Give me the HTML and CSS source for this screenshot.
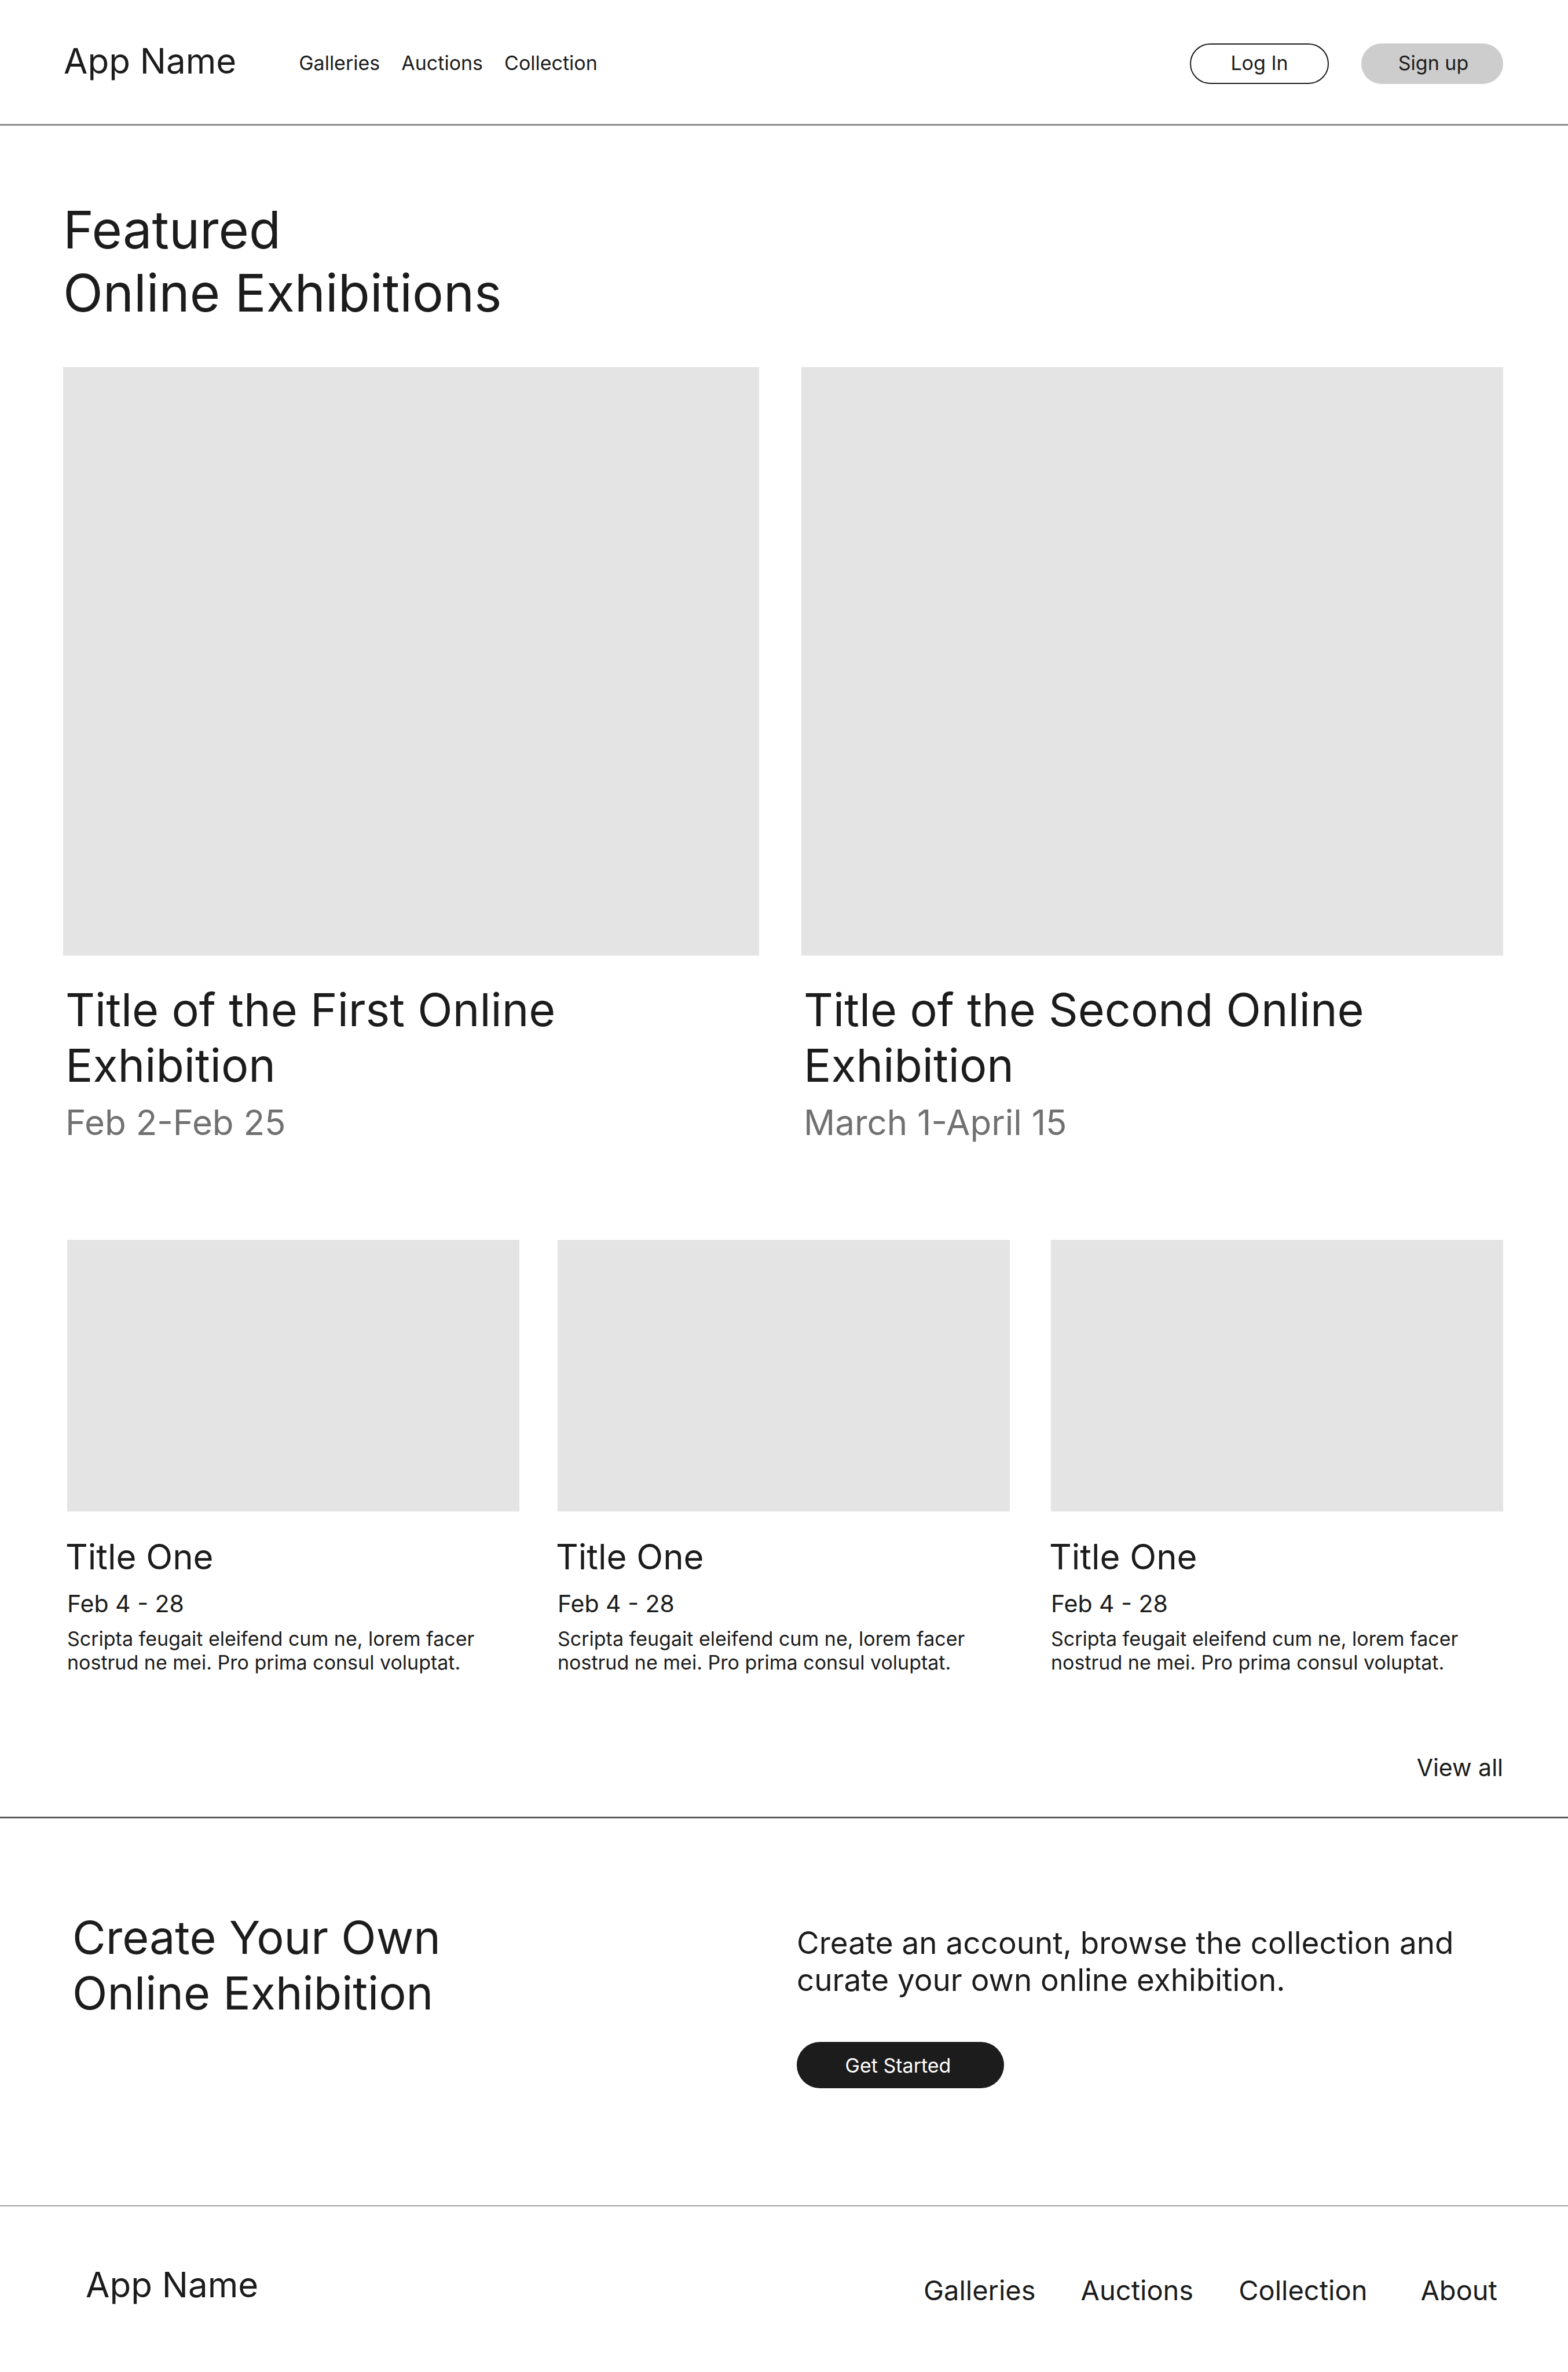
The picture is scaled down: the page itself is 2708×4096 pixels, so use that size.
FILE: index.html
```html
<!DOCTYPE html>
<html lang="en">
<head>
<meta charset="utf-8">
<meta name="viewport" content="width=device-width, initial-scale=1">
<title>App Name</title>
<link rel="stylesheet" href="styles.css">
</head>
<body>
<header class="header">
  <a class="brand" href="#">App Name</a>
  <nav class="nav">
    <a href="#">Galleries</a>
    <a href="#">Auctions</a>
    <a href="#">Collection</a>
  </nav>
  <div class="account">
    <button class="button button-outline" type="button">Log In</button>
    <button class="button button-soft" type="button">Sign up</button>
  </div>
</header>
<main>
  <section class="exhibitions">
    <h1 class="page-title">Featured<br>Online Exhibitions</h1>
    <div class="features">
      <article>
        <div class="feature-image"></div>
        <h2 class="feature-title">Title of the First Online<br>Exhibition</h2>
        <p class="feature-date">Feb 2-Feb 25</p>
      </article>
      <article>
        <div class="feature-image"></div>
        <h2 class="feature-title">Title of the Second Online<br>Exhibition</h2>
        <p class="feature-date">March 1-April 15</p>
      </article>
    </div>
    <div class="cards">
      <article class="card">
        <div class="card-image"></div>
        <h3 class="card-title">Title One</h3>
        <p class="card-date">Feb 4 - 28</p>
        <p class="card-text">Scripta feugait eleifend cum ne, lorem facer<br>nostrud ne mei. Pro prima consul voluptat.</p>
      </article>
      <article class="card">
        <div class="card-image"></div>
        <h3 class="card-title">Title One</h3>
        <p class="card-date">Feb 4 - 28</p>
        <p class="card-text">Scripta feugait eleifend cum ne, lorem facer<br>nostrud ne mei. Pro prima consul voluptat.</p>
      </article>
      <article class="card">
        <div class="card-image"></div>
        <h3 class="card-title">Title One</h3>
        <p class="card-date">Feb 4 - 28</p>
        <p class="card-text">Scripta feugait eleifend cum ne, lorem facer<br>nostrud ne mei. Pro prima consul voluptat.</p>
      </article>
    </div>
    <a class="view-all" href="#">View all</a>
  </section>
  <section class="create">
    <h2 class="create-title">Create Your Own<br>Online Exhibition</h2>
    <div class="create-body">
      <p class="create-text">Create an account, browse the collection and<br>curate your own online exhibition.</p>
      <button class="button button-dark" type="button">Get Started</button>
    </div>
  </section>
</main>
<footer class="footer">
  <a class="brand" href="#">App Name</a>
  <nav class="footer-nav">
    <a href="#">Galleries</a>
    <a href="#">Auctions</a>
    <a href="#">Collection</a>
    <a class="about" href="#">About</a>
  </nav>
</footer>
</body>
</html>
```

FILE: styles.css
```css
* { box-sizing: border-box; }
body {
  margin: 0;
  background: #fff;
  color: #1c1c1c;
  font-family: Inter, "Liberation Sans", sans-serif;
}
h1, h2, h3, p { margin: 0; font-weight: 400; }
a { color: inherit; text-decoration: none; }

.header {
  display: flex;
  align-items: flex-start;
  padding: 67px 112px 71px 110px;
  border-bottom: 3px solid #8e8e8e;
}
.brand { font-size: 60px; line-height: 76px; }
.nav { display: flex; gap: 37px; margin: 22px 0 0 108px; font-size: 34px; line-height: 40px; }
.account { display: flex; gap: 56px; margin: 8px 0 -2px auto; }
.button {
  height: 70px;
  padding: 0 0 4px;
  border: 0;
  border-radius: 40px;
  color: inherit;
  font: inherit;
  font-size: 34px;
}
.button-outline { width: 240px; border: 2px solid #1c1c1c; background: transparent; }
.button-soft { width: 245px; padding-left: 4px; background: #cdcdcd; }
.button-dark { width: 358px; height: 80px; margin-top: 75px; padding: 0 8px 0 0; background: #1c1c1c; color: #fff; }

.exhibitions {
  display: flex;
  flex-direction: column;
  padding: 125px 112px 60px 109px;
  border-bottom: 3px solid #5c5c5c;
}
.page-title { font-size: 90px; line-height: 109px; }
.features { display: grid; grid-template-columns: 1202fr 1212fr; gap: 73px; margin-top: 74px; }
.feature-image { height: 1016px; background: #e4e4e4; }
.feature-title { margin: 45px 0 0 4px; font-size: 79px; line-height: 96px; }
.feature-date { margin: 13px 0 0 4px; color: #717171; font-size: 60px; line-height: 76px; }
.cards { display: grid; grid-template-columns: 781fr 781fr 786fr; gap: 66px; margin: 165px 0 0 7px; }
.card:last-child { padding-left: 5px; }
.card-image { height: 469px; background: #e4e4e4; }
.card-title { margin: 40px 0 0 -3px; font-size: 60px; line-height: 76px; }
.card-date { margin-top: 18px; font-size: 41px; line-height: 50px; }
.card-text { margin-top: 15px; font-size: 34px; line-height: 41px; }
.view-all { align-self: flex-end; margin-top: 136px; font-size: 41px; line-height: 50px; }

.create {
  display: grid;
  grid-template-columns: 1251fr 1220fr;
  padding: 157px 112px 202px 125px;
  border-bottom: 2px solid #9e9e9e;
}
.create-title { font-size: 79px; line-height: 96px; }
.create-body { padding-top: 26px; }
.create-text { font-size: 53px; line-height: 64px; }

.footer {
  display: flex;
  align-items: flex-start;
  justify-content: space-between;
  padding: 97px 122px 112px 148px;
}
.footer-nav { display: flex; gap: 78px; margin-top: 19px; font-size: 47px; line-height: 58px; }
.about { margin-left: 14px; }
```
